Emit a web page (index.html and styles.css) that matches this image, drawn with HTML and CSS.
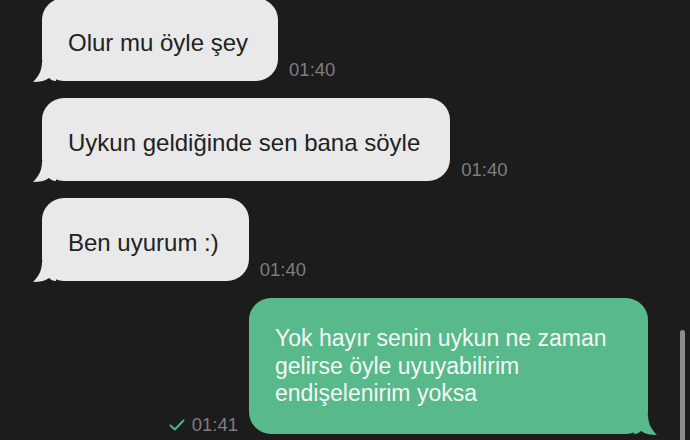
FILE: index.html
```html
<!DOCTYPE html>
<html lang="tr">
<head>
<meta charset="utf-8">
<title>Sohbet</title>
<link rel="stylesheet" href="styles.css">
</head>
<body>
<div class="chat">
  <div class="row in">
    <div class="bubble grey">Olur mu öyle şey
      <svg class="tail" viewBox="0 0 24 20" width="24" height="20"><path d="M10 0 L24 0 L24 19 C21 19 19 18 17 16 C13 19 7 20 1 20 C5 16 10 10 10 0 Z"/></svg>
    </div>
    <span class="time">01:40</span>
  </div>
  <div class="row in">
    <div class="bubble grey">Uykun geldiğinde sen bana söyle
      <svg class="tail" viewBox="0 0 24 20" width="24" height="20"><path d="M10 0 L24 0 L24 19 C21 19 19 18 17 16 C13 19 7 20 1 20 C5 16 10 10 10 0 Z"/></svg>
    </div>
    <span class="time">01:40</span>
  </div>
  <div class="row in">
    <div class="bubble grey">Ben uyurum :)
      <svg class="tail" viewBox="0 0 24 20" width="24" height="20"><path d="M10 0 L24 0 L24 19 C21 19 19 18 17 16 C13 19 7 20 1 20 C5 16 10 10 10 0 Z"/></svg>
    </div>
    <span class="time">01:40</span>
  </div>
  <div class="row out">
    <span class="time sent"><svg class="check" viewBox="0 0 16 12" width="16" height="12"><path d="M1.5 6.5 L5.8 10.5 L14.5 1.5"/></svg>01:41</span>
    <div class="bubble green">Yok hayır senin uykun ne zaman gelirse öyle uyuyabilirim endişelenirim yoksa
      <svg class="tail" viewBox="0 0 24 20" width="24" height="20"><path d="M10 0 L24 0 L24 19 C21 19 19 18 17 16 C13 19 7 20 1 20 C5 16 10 10 10 0 Z"/></svg>
    </div>
  </div>
</div>
<div class="scrollbar"></div>
</body>
</html>
```
FILE: styles.css
```css
html, body {
  margin: 0;
  padding: 0;
  background: #1c1c1c;
  height: 100%;
  overflow: hidden;
}
body {
  font-family: "Liberation Sans", Arial, sans-serif;
  position: relative;
}
.chat {
  display: flex;
  flex-direction: column;
  gap: 17px;
  padding: 0 42px;
  margin-top: -2px;
}
.row {
  display: flex;
  align-items: flex-end;
  gap: 11px;
}
.row.out {
  justify-content: flex-end;
}
.bubble {
  position: relative;
  border-radius: 22px;
  font-size: 24px;
  line-height: 28px;
}
.bubble.grey {
  background: #e9e9e9;
  color: #222222;
  padding: 31px 30px 24px 26px;
}
.bubble.green {
  background: #58b98b;
  color: #f4f8f5;
  font-size: 23px;
  line-height: 27.5px;
  width: 335px;
  padding: 27px 38px 26px 26px;
}
.tail {
  position: absolute;
  bottom: -1px;
  left: -10px;
  display: block;
}
.grey .tail path { fill: #e9e9e9; }
.green .tail {
  left: auto;
  right: -10px;
  transform: scaleX(-1);
}
.green .tail path { fill: #58b98b; }
.time {
  font-size: 18.5px;
  color: #7e7e7e;
  white-space: nowrap;
}
.time.sent {
  display: flex;
  align-items: center;
  gap: 7px;
  margin-bottom: -2px;
}
.check path {
  fill: none;
  stroke: #4fb383;
  stroke-width: 2;
  stroke-linecap: round;
  stroke-linejoin: round;
}
.scrollbar {
  position: absolute;
  left: 680px;
  top: 330px;
  width: 5px;
  height: 120px;
  border-radius: 3px;
  background: #8d8d8d;
}
```
